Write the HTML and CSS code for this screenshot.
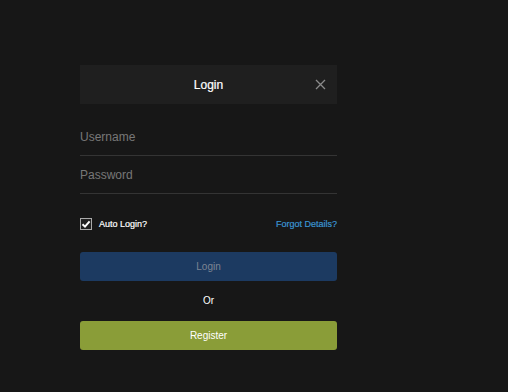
FILE: index.html
```html
<!DOCTYPE html>
<html lang="en">
<head>
  <meta charset="UTF-8" />
  <title>Login</title>
  <link rel="stylesheet" href="styles.css">
</head>
<body>
  <div class="login-box">
    <div class="login-header">
      <h2>Login</h2>
      <button class="close-btn" type="button">
        <svg width="11" height="11" viewBox="0 0 11 11"><path d="M1 1L10 10M10 1L1 10" stroke="#8a8a8a" stroke-width="1.3" fill="none"/></svg>
      </button>
    </div>
    <form class="login-form">
      <input type="text" class="field first" placeholder="Username">
      <input type="password" class="field" placeholder="Password">
      <div class="options">
        <label class="remember">
          <span class="check">
            <svg width="10" height="10" viewBox="0 0 10 10"><path d="M1.5 5.2L4 7.6L8.6 2.4" stroke="#fff" stroke-width="2" fill="none"/></svg>
          </span>
          Auto Login?
        </label>
        <a href="#" class="forgot">Forgot Details?</a>
      </div>
      <button type="submit" class="btn btn-login">Login</button>
      <div class="or">Or</div>
      <button type="button" class="btn btn-register">Register</button>
    </form>
  </div>
</body>
</html>
```

FILE: styles.css
```css
body {
  margin: 0;
  background-color: #171717;
  font-family: "Liberation Sans", Arial, sans-serif;
}
.login-box {
  width: 257px;
  margin: 65px 0 0 80px;
}
.login-header {
  position: relative;
  height: 39px;
  background: #1f1f1f;
  display: flex;
  align-items: center;
  justify-content: center;
}
.login-header h2 {
  margin: 0;
  font-size: 12px;
  font-weight: normal;
  color: #fff;
  -webkit-text-stroke: 0.2px #fff;
}
.close-btn {
  position: absolute;
  right: 11px;
  top: 14px;
  background: none;
  border: none;
  padding: 0;
  line-height: 0;
}
.login-form {
  display: flex;
  flex-direction: column;
}
.field {
  height: 38px;
  box-sizing: border-box;
  background: transparent;
  border: none;
  border-bottom: 1px solid #343434;
  padding: 0;
  font-family: inherit;
  font-size: 12px;
  color: #ddd;
  outline: none;
}
.field.first {
  margin-top: 14px;
}
.field::placeholder {
  color: #777;
}
.options {
  display: flex;
  justify-content: space-between;
  align-items: center;
  margin-top: 23px;
  height: 13px;
}
.remember {
  display: flex;
  align-items: center;
  gap: 7px;
  font-size: 9px;
  color: #fff;
  -webkit-text-stroke: 0.2px #fff;
}
.check {
  width: 10px;
  height: 10px;
  border: 1px solid #aaa;
  display: flex;
  align-items: center;
  justify-content: center;
  background: #222;
}
.forgot {
  font-size: 9px;
  color: #3b95d3;
  -webkit-text-stroke: 0.2px #3b95d3;
  text-decoration: none;
}
.btn {
  height: 29px;
  border: none;
  border-radius: 3px;
  font-family: inherit;
  font-size: 10px;
}
.btn-login {
  margin-top: 22px;
  background: #1c3a61;
  color: #7c8593;
}
.or {
  margin-top: 14px;
  text-align: center;
  font-size: 10px;
  color: #fff;
  line-height: 12px;
}
.btn-register {
  margin-top: 14px;
  background: #8a9d38;
  color: #fff;
}
```
